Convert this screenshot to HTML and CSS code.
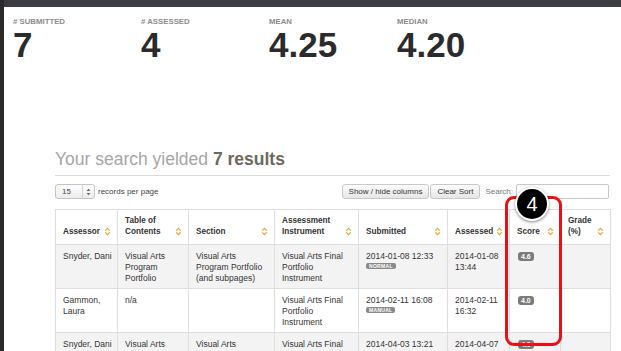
FILE: index.html
```html
<!DOCTYPE html>
<html lang="en">
<head>
    <meta charset="UTF-8">
    <title>Assessment results</title>
    <link rel="stylesheet" href="styles.css">
</head>
<body>
    <div class="topbar"></div>

    <div class="stats">
        <div class="stat">
            <div class="stat-label"># Submitted</div>
            <div class="stat-value">7</div>
        </div>
        <div class="stat">
            <div class="stat-label"># Assessed</div>
            <div class="stat-value">4</div>
        </div>
        <div class="stat">
            <div class="stat-label">Mean</div>
            <div class="stat-value">4.25</div>
        </div>
        <div class="stat">
            <div class="stat-label">Median</div>
            <div class="stat-value">4.20</div>
        </div>
    </div>

    <div class="main">
        <h2 class="results-title">Your search yielded <strong>7 results</strong></h2>

        <div class="controls">
            <div class="per-page">
                <div class="select-box">
                    <span>15</span>
                    <span class="select-arrows">
                        <svg width="5" height="8" viewBox="0 0 5 8"><path d="M0.5 3 L2.5 0.8 L4.5 3 Z M0.5 5 L2.5 7.2 L4.5 5 Z" fill="#666"/></svg>
                    </span>
                </div>
                <span>records per page</span>
            </div>
            <div class="tools">
                <button type="button" class="btn">Show / hide columns</button>
                <button type="button" class="btn">Clear Sort</button>
                <label class="search-label">Search:</label>
                <input type="text" class="search-input">
            </div>
        </div>

        <div class="table-wrap">
            <table class="results">
                <colgroup>
                    <col style="width:62px">
                    <col style="width:71px">
                    <col style="width:86px">
                    <col style="width:84px">
                    <col style="width:89px">
                    <col style="width:62px">
                    <col style="width:51px">
                    <col style="width:50px">
                </colgroup>
                <thead>
                    <tr>
                        <th><div class="th-inner"><span>Assessor</span><span class="sort"></span></div></th>
                        <th><div class="th-inner"><span>Table of Contents</span><span class="sort"></span></div></th>
                        <th><div class="th-inner"><span>Section</span><span class="sort"></span></div></th>
                        <th><div class="th-inner"><span>Assessment Instrument</span><span class="sort"></span></div></th>
                        <th><div class="th-inner"><span>Submitted</span><span class="sort"></span></div></th>
                        <th><div class="th-inner"><span>Assessed</span><span class="sort"></span></div></th>
                        <th><div class="th-inner"><span>Score</span><span class="sort"></span></div></th>
                        <th><div class="th-inner"><span>Grade (%)</span><span class="sort"></span></div></th>
                    </tr>
                </thead>
                <tbody>
                    <tr class="odd">
                        <td class="col-name">Snyder, Dani</td>
                        <td>Visual Arts Program Portfolio</td>
                        <td>Visual Arts Program Portfolio (and subpages)</td>
                        <td>Visual Arts Final Portfolio Instrument</td>
                        <td class="col-date">2014-01-08 12:33<br><span class="tag">Normal</span></td>
                        <td>2014-01-08 13:44</td>
                        <td><span class="score">4.6</span></td>
                        <td></td>
                    </tr>
                    <tr>
                        <td class="col-name">Gammon, Laura</td>
                        <td>n/a</td>
                        <td></td>
                        <td>Visual Arts Final Portfolio Instrument</td>
                        <td class="col-date">2014-02-11 16:08<br><span class="tag">Manual</span></td>
                        <td>2014-02-11 16:32</td>
                        <td><span class="score">4.0</span></td>
                        <td></td>
                    </tr>
                    <tr class="odd">
                        <td class="col-name">Snyder, Dani</td>
                        <td>Visual Arts Program Portfolio</td>
                        <td>Visual Arts Program Portfolio (and subpages)</td>
                        <td>Visual Arts Final Portfolio Instrument</td>
                        <td class="col-date">2014-04-03 13:21<br><span class="tag">Normal</span></td>
                        <td>2014-04-07 14:37</td>
                        <td><span class="score">4.0</span></td>
                        <td></td>
                    </tr>
                </tbody>
            </table>

            <div class="highlight"></div>
            <div class="step-badge">4</div>
        </div>
    </div>

    <script>
        // sort icons
        document.querySelectorAll('.sort').forEach(function (el) {
            el.innerHTML = '<svg width="7" height="9" viewBox="0 0 7 9"><path d="M1.2 3.6 L3.5 1.3 L5.8 3.6 M1.2 5.4 L3.5 7.7 L5.8 5.4" fill="none" stroke="#f2a23a" stroke-width="1.3"/></svg>';
        });
    </script>
</body>
</html>
```

FILE: styles.css
```css
html, body {
    margin: 0;
    padding: 0;
}
body {
    font-family: "Liberation Sans", Arial, sans-serif;
    background: #fff;
    color: #333;
    border-left: 4px solid #2a2a2b;
    height: 351px;
    overflow: hidden;
    box-sizing: border-box;
}
.topbar {
    height: 7px;
    background: #3b3d42;
}
.stats {
    display: flex;
    padding: 10px 0 0 9px;
}
.stat {
    width: 128px;
}
.stat-label {
    font-size: 7.8px;
    line-height: 10px;
    font-weight: bold;
    text-transform: uppercase;
    color: #8c8c8c;
}
.stat-value {
    font-size: 35px;
    line-height: 35px;
    font-weight: bold;
    color: #2b2b2d;
}
.main {
    width: 555px;
    margin-left: 51px;
    position: relative;
}
.results-title {
    margin: 87px 0 0;
    font-size: 17.5px;
    line-height: 20px;
    font-weight: normal;
    color: #a6a6a6;
    padding-bottom: 6px;
    border-bottom: 1px solid #dcdcdc;
}
.results-title strong {
    color: #6c6a5c;
}
.controls {
    display: flex;
    justify-content: space-between;
    align-items: center;
    margin-top: 8px;
    height: 15px;
    font-size: 8px;
    color: #444;
}
.per-page {
    display: flex;
    align-items: center;
    gap: 3px;
}
.select-box {
    width: 40px;
    height: 15px;
    box-sizing: border-box;
    border: 1px solid #c4c4c4;
    border-radius: 3px;
    background: linear-gradient(#fff, #ececec);
    display: flex;
    align-items: center;
    justify-content: space-between;
    padding-left: 6px;
    font-size: 8px;
}
.select-arrows {
    width: 11px;
    height: 13px;
    border-left: 1px solid #d4d4d4;
    display: flex;
    align-items: center;
    justify-content: center;
}
.tools {
    display: flex;
    align-items: center;
    margin-right: 1px;
}
.btn {
    height: 15px;
    padding: 0 6px;
    border: 1px solid #c8c8c8;
    border-radius: 3px;
    background: linear-gradient(#fcfcfc, #e6e6e6);
    font-family: "Liberation Sans", Arial, sans-serif;
    font-size: 8px;
    color: #333;
    margin-right: 1px;
}
.search-label {
    margin: 0 3px 0 4px;
    color: #777;
}
.search-input {
    width: 93px;
    height: 15px;
    box-sizing: border-box;
    border: 1px solid #c8c8c8;
    border-radius: 2px;
    padding: 0;
}
.table-wrap {
    position: relative;
    margin-top: 10px;
}
.results {
    width: 555px;
    table-layout: fixed;
    border-collapse: collapse;
    font-size: 8.5px;
    line-height: 11px;
    color: #333;
}
.results th, .results td {
    border: 1px solid #dedede;
    text-align: left;
    vertical-align: top;
}
.results th {
    vertical-align: bottom;
    font-weight: bold;
    font-size: 8.2px;
    padding: 5px 6px 7px 7px;
    height: 20px;
    background: #fff;
}
.th-inner {
    display: flex;
    justify-content: space-between;
    align-items: flex-end;
    gap: 3px;
}
.sort {
    display: flex;
    flex: none;
    padding-bottom: 1px;
}
.results td {
    padding: 6px 8px 4px 7px;
}
.results td.col-name {
    padding-right: 0;
}
.results td.col-date {
    padding-right: 2px;
}
.results tr.odd td {
    background: #f3f3f3;
}
.tag {
    display: inline-block;
    background: #8a8a8a;
    color: #fff;
    font-size: 5px;
    line-height: 6px;
    font-weight: bold;
    text-transform: uppercase;
    padding: 0 3px;
    border-radius: 2px;
    letter-spacing: 0.3px;
    vertical-align: top;
    margin-top: 1px;
}
.score {
    display: inline-block;
    background: #7b7b7b;
    color: #fff;
    font-size: 7px;
    line-height: 9px;
    font-weight: bold;
    padding: 0 3px;
    border-radius: 3px;
    margin-left: 1px;
}
.highlight {
    position: absolute;
    left: 450px;
    top: -13px;
    width: 57px;
    height: 150px;
    box-sizing: border-box;
    border: 3px solid #ec0f16;
    border-radius: 9px;
}
.step-badge {
    position: absolute;
    left: 460px;
    top: -22px;
    width: 30px;
    height: 30px;
    border: 2px solid #fff;
    border-radius: 50%;
    background: #000;
    box-shadow: 0 1px 3px rgba(0,0,0,0.5);
    color: #fff;
    font-size: 20px;
    line-height: 30px;
    text-align: center;
}
```
